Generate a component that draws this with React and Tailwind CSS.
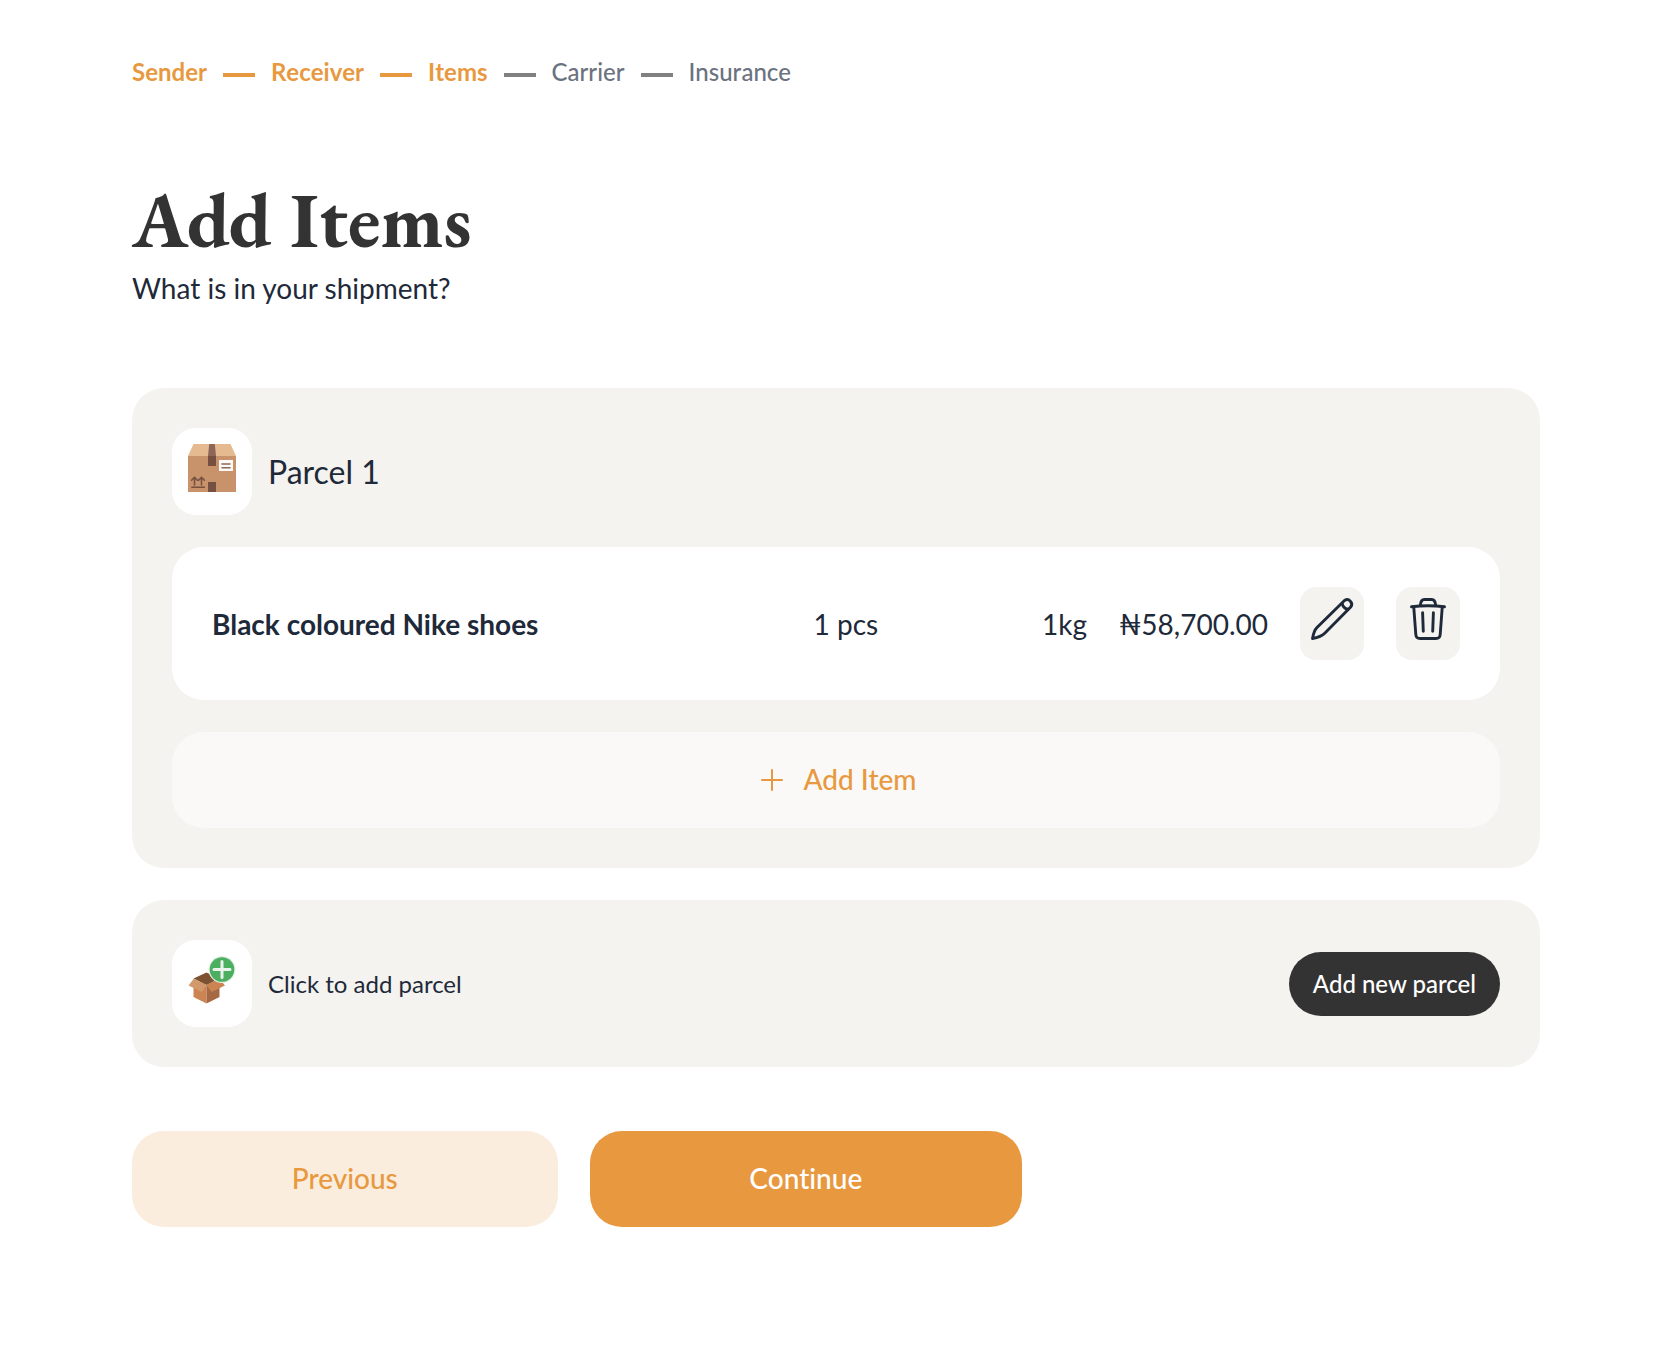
import React, { useState } from 'react';
import clsx from 'clsx';

const steps = ["Sender", "Receiver", "Items", "Carrier", "Insurance"];

const BoxIcon = () => (
    <svg viewBox="0 0 48 48" className="size-12" aria-hidden="true">
        <path d="M0 12h48v36H0z" fill="#c8926a" />
        <path d="M5.5 0h37L48 12H0z" fill="#e6ba90" />
        <path d="M21.2 0h5.6l1.2 12h-8z" fill="#8d6658" />
        <path d="M20 12h8v10h-8zM20 38h8v10h-8z" fill="#754f40" />
        <path d="M31 16h14v11H31z" fill="#f9f9f8" />
        <path d="M34 20h8M34 23.7h8" stroke="#8d6658" strokeWidth="1.6" strokeLinecap="round" />
        <path d="M3.8 43.3h12.6M6.5 41v-7.5M13.5 41v-7.5M3.6 36.2l2.9-2.9 2.9 2.9M10.6 36.2l2.9-2.9 2.9 2.9" fill="none" stroke="#754f40" strokeWidth="1.5" strokeLinecap="round" strokeLinejoin="round" />
    </svg>
);

const OpenBoxIcon = () => (
    <svg viewBox="0 0 48 48" className="size-12" aria-hidden="true">
        <path d="M5.5 22.5L18.5 16.5 31.5 22.5 18.5 29z" fill="#7d5233" />
        <path d="M5.5 23L18.5 29v18.5L5.5 41z" fill="#cb8452" />
        <path d="M31.5 23L18.5 29v18.5l13-6.5z" fill="#a56a44" />
        <path d="M5.5 23L18.5 29 14 36 .5 29.5z" fill="#d29a6c" />
        <path d="M31.5 23L18.5 29l5 7L37 29.5z" fill="#cb8452" />
        <circle cx="34" cy="13.5" r="13.5" fill="#e3eee8" />
        <circle cx="34" cy="13.5" r="12.3" fill="#4caf60" />
        <path d="M34 5.5v16M26 13.5h16" stroke="#ecf3ee" strokeWidth="3" strokeLinecap="round" />
    </svg>
);

const PencilIcon = () => (
    <svg viewBox="0 0 48 48" className="size-12" fill="none" stroke="currentColor" strokeWidth="2.9" strokeLinecap="round" strokeLinejoin="round" aria-hidden="true">
        <path d="M36.5 5.5a4.6 4.6 0 0 1 6.2 6.6L17 38c-3.3 3.3-8 4.7-12.5 5.5C5.2 39.5 6 35.5 9 32.5z" />
        <path d="M34.2 8.5c.5 3.2 2.8 5.3 5.8 5.8" />
    </svg>
);

const TrashIcon = () => (
    <svg viewBox="0 0 48 48" className="size-12" fill="none" stroke="currentColor" strokeWidth="2.9" strokeLinecap="round" strokeLinejoin="round" aria-hidden="true">
        <path d="M7.5 11.8c11-1.3 22-1.3 33 0" />
        <path d="M16.3 10.5c.3-3.6 1-6 4-6h7.4c3 0 3.7 2.4 4 6" />
        <path d="M9.8 12.5l2 27c.2 2.6 1.7 4 4.2 4h16c2.5 0 4-1.4 4.2-4l2-27" />
        <path d="M18.6 17.8l.7 18.4M29.4 17.8l-.7 18.4" />
    </svg>
);

const PlusIcon = () => (
    <svg viewBox="0 0 32 32" className="size-8" fill="none" stroke="currentColor" strokeWidth="2" strokeLinecap="round" aria-hidden="true">
        <path d="M16 6v20M6 16h20" />
    </svg>
);

const Tile = ({ children }) => (
    <div className="shrink-0 rounded-3xl bg-white px-4 pt-4 pb-[23px]">{children}</div>
);

const IconButton = ({ label, onClick, children }) => (
    <button type="button" aria-label={label} onClick={onClick} className="shrink-0 cursor-pointer rounded-2xl bg-[#f4f3ef] px-2 pt-2 pb-[17px]">
        {children}
    </button>
);

const formatNaira = (amount) =>
    "₦" + amount.toLocaleString("en-US", { minimumFractionDigits: 2 });

const AddItems = () => {
    const current = 2;
    const [parcels, setParcels] = useState([
        [{ name: "Black coloured Nike shoes", qty: 1, weight: 1, price: 58700 }],
    ]);

    const addParcel = () => setParcels([...parcels, []]);

    const addItem = (index) =>
        setParcels(parcels.map((items, i) => (i === index ? [...items, { name: "New item", qty: 1, weight: 1, price: 0 }] : items)));

    const removeItem = (index, itemIndex) =>
        setParcels(parcels.map((items, i) => (i === index ? items.filter((_, j) => j !== itemIndex) : items)));

    return (
        <main className="min-h-screen bg-white pt-14 pr-[134px] pb-32 pl-[132px] font-['Lato',sans-serif] text-[28px] leading-10 text-gray-800 [font-variant-ligatures:none]">
            {/* STEPS */}
            <ol className="flex items-center gap-4 text-2xl [font-kerning:none]">
                {steps.map((step, i) => (
                    <React.Fragment key={step}>
                        {i > 0 && <li aria-hidden="true" className={clsx("mt-1.5 h-1 w-8", i <= current ? "bg-[#e8993f]" : "bg-[#808080]")} />}
                        <li className={i <= current ? "font-bold text-[#e8993f]" : "font-medium text-[#6b7280]"}>{step}</li>
                    </React.Fragment>
                ))}
            </ol>

            <h1 className="mt-[85px] font-['EB_Garamond','Liberation_Serif',serif] text-[78px] leading-[92px] font-bold text-[#333333]">Add Items</h1>
            <p className="mt-[3px]">What is in your shipment?</p>

            <div className="mt-20 space-y-8">
                {parcels.map((items, index) => (
                    <section key={index} className="space-y-8 rounded-[32px] bg-[#f4f3ef] p-10">
                        <div className="flex items-center gap-4">
                            <Tile><BoxIcon /></Tile>
                            <h2 className="text-[32px]">Parcel {index + 1}</h2>
                        </div>

                        {items.map((item, itemIndex) => (
                            <div key={itemIndex} className="flex items-center gap-8 rounded-[32px] bg-white p-10">
                                <div className="grid flex-1 grid-cols-[11fr_5fr]">
                                    <span className="font-bold">{item.name}</span>
                                    <div className="flex justify-between">
                                        <span>{item.qty} pcs</span>
                                        <span>{item.weight}kg</span>
                                    </div>
                                </div>
                                <span>{formatNaira(item.price)}</span>
                                <IconButton label="Edit item"><PencilIcon /></IconButton>
                                <IconButton label="Remove item" onClick={() => removeItem(index, itemIndex)}><TrashIcon /></IconButton>
                            </div>
                        ))}

                        <button type="button" onClick={() => addItem(index)} className="flex h-24 w-full cursor-pointer items-center justify-center gap-4 rounded-[32px] bg-[#faf9f7] font-medium text-[#e8993f]">
                            <PlusIcon />
                            <span className="pb-0.5">Add Item</span>
                        </button>
                    </section>
                ))}

                {/* NEW PARCEL */}
                <section className="flex items-center gap-4 rounded-[32px] bg-[#f4f3ef] p-10">
                    <Tile><OpenBoxIcon /></Tile>
                    <p className="flex-1 text-2xl">Click to add parcel</p>
                    <button type="button" onClick={addParcel} className="h-16 cursor-pointer rounded-full bg-[#333333] px-6 text-2xl font-medium text-white">
                        Add new parcel
                    </button>
                </section>
            </div>

            <div className="mt-16 flex max-w-[890px] gap-8">
                <button type="button" className="h-24 grow cursor-pointer rounded-[32px] bg-[#faeddd] pb-0.5 font-medium text-[#e8993f]">Previous</button>
                <button type="button" className="h-24 grow cursor-pointer rounded-[32px] bg-[#e8993f] pb-0.5 font-medium text-white">Continue</button>
            </div>
        </main>
    );
};

export default AddItems;
